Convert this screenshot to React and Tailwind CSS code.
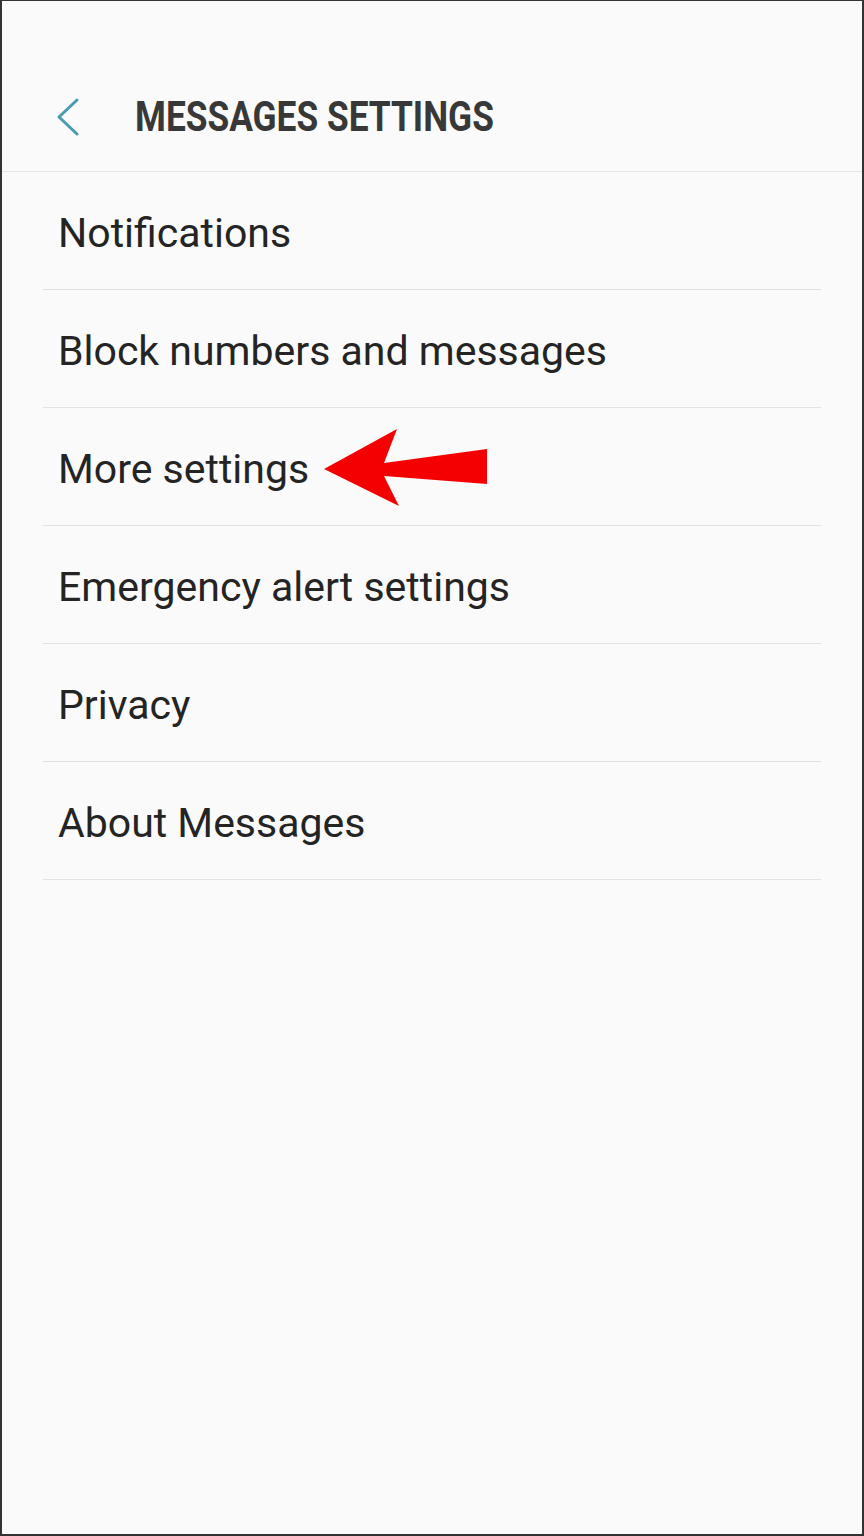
import React from "react";

const items = [
  "Notifications",
  "Block numbers and messages",
  "More settings",
  "Emergency alert settings",
  "Privacy",
  "About Messages",
];

function RedArrow() {
  return (
    <svg
      className="absolute left-[320px] top-[426px]"
      width="170"
      height="82"
      viewBox="320 426 170 82"
    >
      <polygon
        points="322,468 395,428 382,462 485,448 485,483 382,475 397,505"
        fill="#f50000"
      />
    </svg>
  );
}

export default function App() {
  return (
    <div
      className="relative w-[864px] h-[1536px] bg-[#fafafa] border-t border-l-2 border-r-2 border-b-2 border-[#333] overflow-hidden"
      style={{ fontFamily: "Roboto, 'Liberation Sans', sans-serif" }}
    >
      <div className="h-[171px] flex items-center pt-[62px] border-b border-[#e6e6e6]">
        <div className="w-[133px] flex items-center pl-[51px]">
          <svg width="28" height="40" viewBox="0 0 28 40">
            <path
              d="M24 3 L6 20 L24 37"
              fill="none"
              stroke="#4a9ab3"
              strokeWidth="3"
              strokeLinecap="round"
              strokeLinejoin="round"
            />
          </svg>
        </div>
        <h1 className="text-[42px] font-bold text-[#383838] leading-none whitespace-nowrap origin-left scale-x-[0.84]">
          MESSAGES SETTINGS
        </h1>
      </div>
      <div className="px-[41px]">
        {items.map((label) => (
          <div
            key={label}
            className="h-[118px] flex items-center border-b border-[#e3e3e3] pl-[15px] pt-[5px]"
          >
            <span className="text-[41px] text-[#242424] leading-none">{label}</span>
          </div>
        ))}
      </div>
      <RedArrow />
    </div>
  );
}
